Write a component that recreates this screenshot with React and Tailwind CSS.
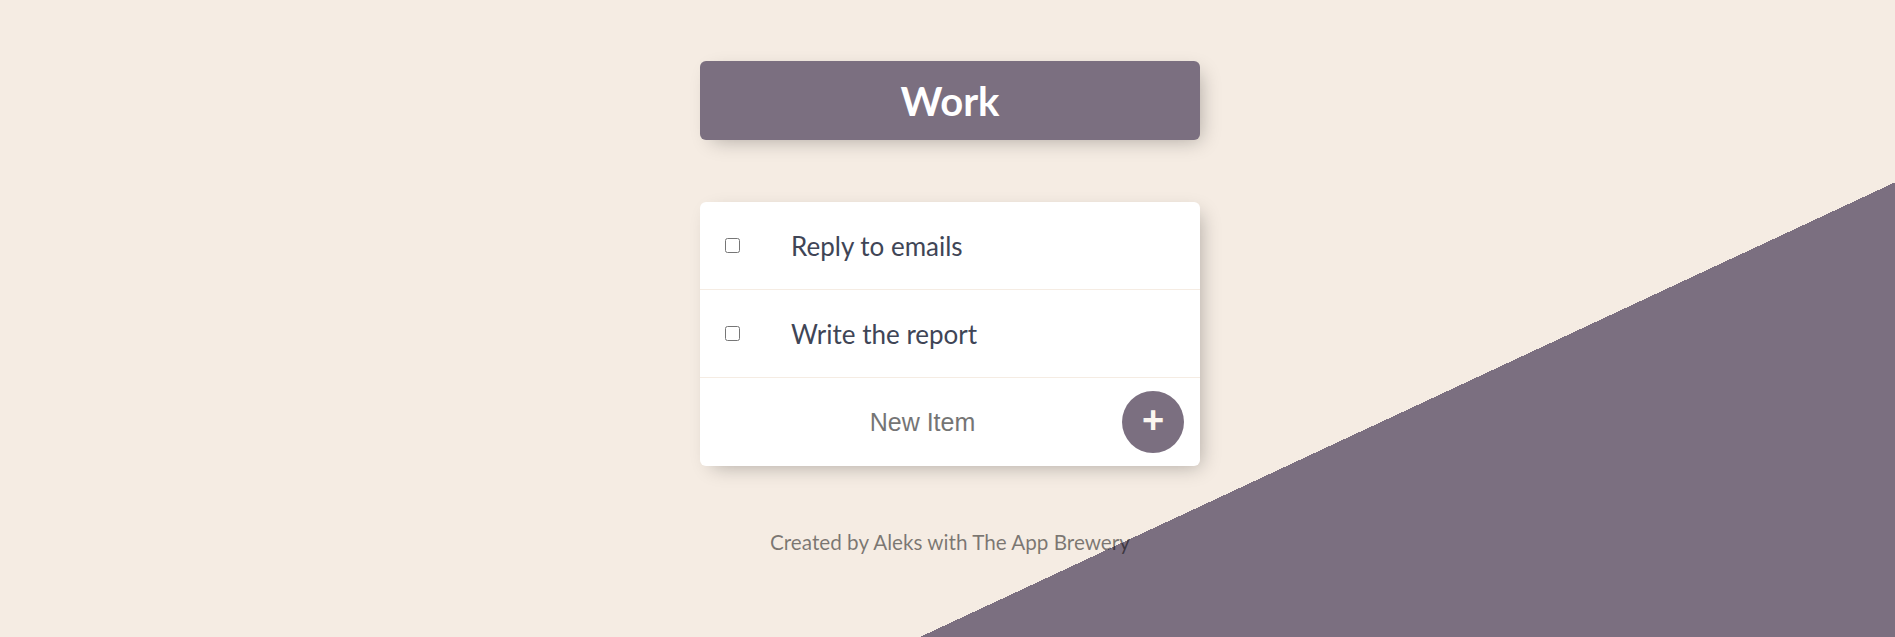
const ITEMS = ["Reply to emails", "Write the report"];

function TodoRow({ text }) {
  return (
    <div className="flex h-[88px] items-center border-b border-[#f5ece3]">
      <input type="checkbox" className="ml-[25px] h-[15px] w-[15px] shrink-0" />
      <p className="pl-[51px] text-[26px] leading-none text-[#404556]">{text}</p>
    </div>
  );
}

export default function App() {
  return (
    <div className="h-[637px] overflow-hidden bg-[#f5ece3] bg-[linear-gradient(155deg,#f5ece3_70.1%,#7b6f80_70.1%)] pl-[5px] pt-[61px] font-['Lato',sans-serif]">
      <div className="mx-auto flex h-[79px] w-[500px] items-center justify-center rounded-[6px] bg-[#7b6f80] shadow-[6px_6px_19px_-6px_rgba(0,0,0,0.3)]">
        <h1 className="text-[40px] font-bold text-white">Work</h1>
      </div>

      <div className="mx-auto mt-[62px] w-[500px] rounded-[6px] bg-white shadow-[6px_6px_19px_-6px_rgba(0,0,0,0.3)]">
        {ITEMS.map((item) => (
          <TodoRow key={item} text={item} />
        ))}
        <form className="flex h-[88px] items-center pl-[27px]" onSubmit={(e) => e.preventDefault()}>
          <input
            type="text"
            placeholder="New Item"
            className="h-[75px] w-[391px] bg-white text-center font-['Liberation_Sans',Arial,sans-serif] text-[25px] outline-none placeholder:text-[#757575]"
          />
          <button
            type="submit"
            className="ml-[4px] flex h-[62px] w-[62px] shrink-0 items-center justify-center rounded-full bg-[#7b6f80] pb-[5px] font-['Liberation_Sans',Arial,sans-serif] text-[38px] font-bold leading-none text-[#fbf6f0]"
          >
            +
          </button>
        </form>
      </div>

      <footer className="mt-[63px] text-center text-[20.7px] leading-[27px] text-black/50">
        Created by Aleks with The App Brewery
      </footer>
    </div>
  );
}
